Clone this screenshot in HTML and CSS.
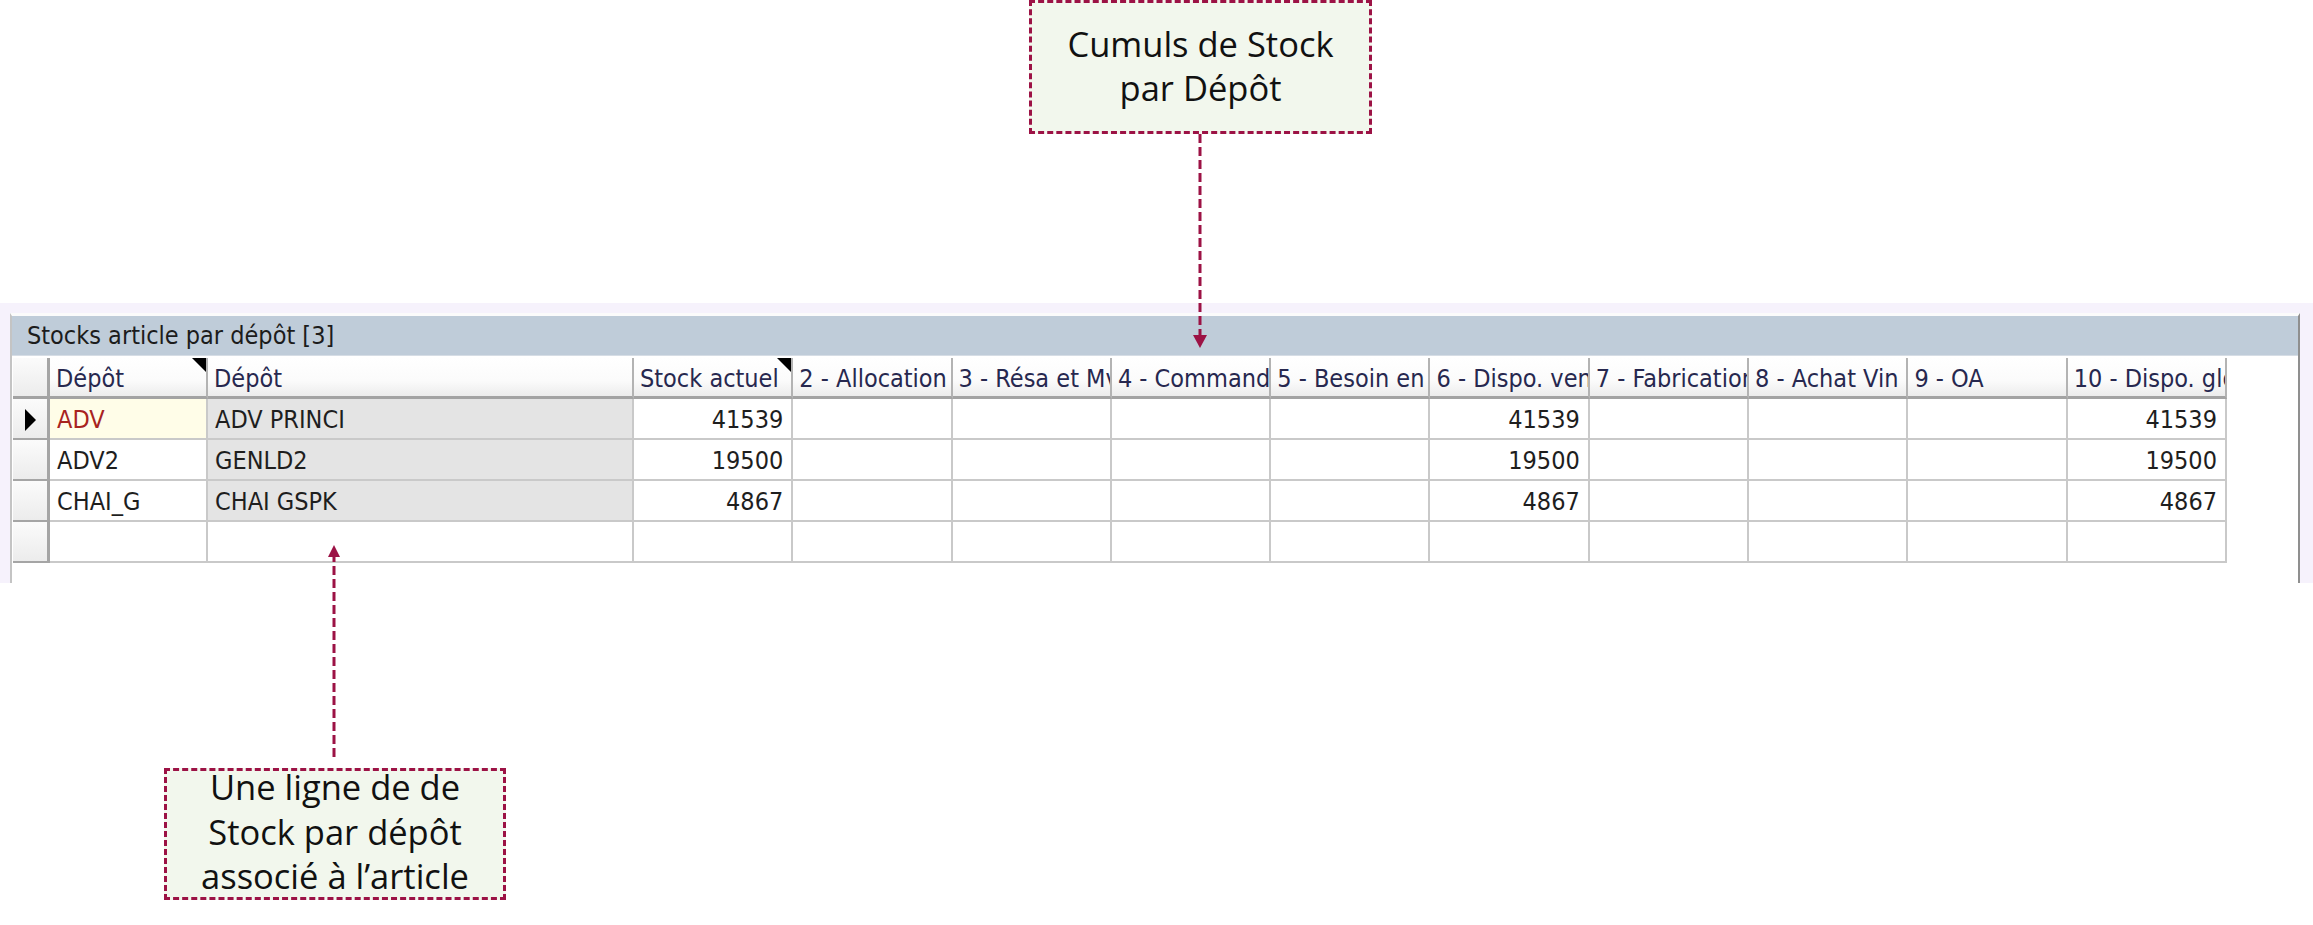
FILE: index.html
```html
<!DOCTYPE html>
<html lang="fr">
  <head>
    <meta charset="UTF-8" />
    <title>Stocks article par dépôt</title>
    <link rel="stylesheet" href="styles.css">
  </head>
  <body>
    <div id="page">
      <!-- Annotations (dashed callouts) -->
      <div class="callout callout-top">Cumuls de Stock<br>par Dépôt</div>
      <div class="callout callout-bottom">
        <p>Une ligne de de<br>Stock par dépôt<br>associé à l’article</p>
      </div>
      <svg class="connectors" width="2313" height="925" viewBox="0 0 2313 925">
        <line x1="1200" y1="134" x2="1200" y2="336" />
        <polygon points="1193,335 1207,335 1200,348" />
        <line x1="334" y1="757" x2="334" y2="556" />
        <polygon points="328,557 340,557 334,545" />
      </svg>

      <div class="frame">
        <div class="panel">
          <div class="titlebar">Stocks article par dépôt [3]</div>
          <table class="grid">
            <colgroup>
              <col class="c-ind">
              <col class="c-code">
              <col class="c-name">
              <col class="c-num" span="10">
            </colgroup>
            <thead>
              <tr>
                <th class="ind"></th>
                <th class="sorted">Dépôt</th>
                <th>Dépôt</th>
                <th class="sorted">Stock actuel</th>
                <th>2 - Allocation</th>
                <th>3 - Résa et Mvt</th>
                <th>4 - Commande</th>
                <th>5 - Besoin en</th>
                <th>6 - Dispo. vente</th>
                <th>7 - Fabrication</th>
                <th>8 - Achat Vin</th>
                <th>9 - OA</th>
                <th>10 - Dispo. global</th>
              </tr>
            </thead>
            <tbody>
              <tr>
                <td class="ind"><span class="pointer"></span></td>
                <td class="code current">ADV</td>
                <td class="name">ADV PRINCI</td>
                <td class="num">41539</td>
                <td></td><td></td><td></td><td></td>
                <td class="num">41539</td>
                <td></td><td></td><td></td>
                <td class="num">41539</td>
              </tr>
              <tr>
                <td class="ind"></td>
                <td class="code">ADV2</td>
                <td class="name">GENLD2</td>
                <td class="num">19500</td>
                <td></td><td></td><td></td><td></td>
                <td class="num">19500</td>
                <td></td><td></td><td></td>
                <td class="num">19500</td>
              </tr>
              <tr>
                <td class="ind"></td>
                <td class="code">CHAI_G</td>
                <td class="name">CHAI GSPK</td>
                <td class="num">4867</td>
                <td></td><td></td><td></td><td></td>
                <td class="num">4867</td>
                <td></td><td></td><td></td>
                <td class="num">4867</td>
              </tr>
              <tr>
                <td class="ind"></td>
                <td></td><td></td><td></td>
                <td></td><td></td><td></td><td></td>
                <td></td><td></td><td></td><td></td><td></td>
              </tr>
            </tbody>
          </table>
        </div>
      </div>
    </div>
  </body>
</html>
```
FILE: styles.css
```css
html,
body {
  margin: 0;
  padding: 0;
  background: white;
}
#page {
  position: relative;
  width: 2313px;
  height: 925px;
  overflow: hidden;
}

/* callouts */
.callout {
  position: absolute;
  box-sizing: border-box;
  background: #f2f7ed;
  border: 3px dashed #9c1245;
  font-family: "Open Sans", "Noto Sans", sans-serif;
  font-size: 34.5px;
  line-height: 44px;
  color: #111;
  text-align: center;
  z-index: 2;
}
.callout p {
  margin: -6px 0 0 0;
}
.callout-top {
  left: 1029px;
  top: 0;
  width: 343px;
  height: 134px;
  padding-top: 19px;
}
.callout-bottom {
  left: 164px;
  top: 768px;
  width: 342px;
  height: 132px;
  line-height: 44.5px;
}
.connectors {
  position: absolute;
  left: 0;
  top: 0;
  pointer-events: none;
  z-index: 3;
}
.connectors line {
  stroke: #9c1245;
  stroke-width: 3;
  stroke-dasharray: 9 4;
}
.connectors polygon {
  fill: #9c1245;
}

/* stock panel */
.frame {
  margin-top: 303px;
  height: 280px;
  box-sizing: border-box;
  padding: 10px 13px 0 10px;
  background: #f6f2fc;
}
.panel {
  height: 100%;
  box-sizing: border-box;
  background: #fff;
  border-top: 3px solid #fbfbfb;
  border-left: 2px solid #c4c4c4;
  border-right: 2px solid #8f8f8f;
}
.titlebar {
  height: 39px;
  line-height: 40px;
  padding-left: 15px;
  background: #bfccd9;
  border-bottom: 1px solid #d6dde5;
  font-family: "DejaVu Sans Condensed", "DejaVu Sans", sans-serif;
  font-stretch: condensed;
  font-size: 25px;
  color: #1c1c1c;
  margin-bottom: 2px;
}

.grid {
  table-layout: fixed;
  width: 2214px;
  margin-left: 1px;
  border-collapse: separate;
  border-spacing: 0;
  font-family: "DejaVu Sans Condensed", "DejaVu Sans", sans-serif;
  font-stretch: condensed;
  font-size: 25px;
  color: #1e1e1e;
}
.c-ind { width: 37px; }
.c-code { width: 158px; }
.c-name { width: 426px; }
.c-num { width: 159.3px; }

.grid tr {
  height: 41px;
}
.grid th,
.grid td {
  box-sizing: border-box;
  padding: 2px 7px 0 7px;
  white-space: nowrap;
  overflow: hidden;
  text-align: left;
  font-weight: normal;
  border-right: 2px solid #c9c9c9;
  border-bottom: 2px solid #c9c9c9;
}
.grid th {
  position: relative;
  padding-left: 6px;
  color: #27284f;
  background: linear-gradient(#ffffff, #fbfbfb 60%, #ececec);
  border-right: 2px solid #b3b3b3;
  border-bottom: 3px solid #a3a3a3;
  text-overflow: clip;
}
.grid th.sorted::after {
  content: "";
  position: absolute;
  top: 0;
  right: 0;
  border-top: 14px solid #000;
  border-left: 14px solid transparent;
}
.grid .ind {
  padding: 0 0 0 12px;
  background: linear-gradient(#fbfbfb, #ececec);
  border-right: 3px solid #a5a5a5;
  border-bottom: 2px solid #a5a5a5;
}
.grid th.ind {
  border-bottom: 3px solid #a3a3a3;
}
.pointer {
  display: inline-block;
  vertical-align: middle;
  width: 0;
  height: 0;
  border-left: 11px solid #000;
  border-top: 11px solid transparent;
  border-bottom: 11px solid transparent;
}
.grid td.current {
  background: #fffde8;
  color: #a8231f;
}
.grid td.name {
  background: #e4e4e4;
}
.grid td.num {
  text-align: right;
  padding-right: 8px;
}
```
